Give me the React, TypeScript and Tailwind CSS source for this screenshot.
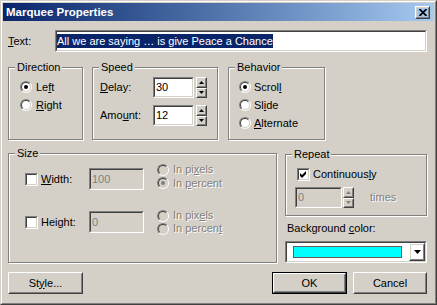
import React from "react";

const font = "font-['Liberation_Sans',Arial,sans-serif]";
const dim = "text-[#808080] [text-shadow:1px_1px_0_#fff]";

function Raised({ className = "", children }: { className?: string; children?: React.ReactNode }) {
  return (
    <div className={`border border-t-white border-l-white border-r-[#404040] border-b-[#404040] ${className}`}>
      <div className="h-full w-full border border-t-[#d4d0c8] border-l-[#d4d0c8] border-r-[#808080] border-b-[#808080] flex items-center justify-center">
        {children}
      </div>
    </div>
  );
}

function Sunken({ className = "", inner = "bg-white", children }: { className?: string; inner?: string; children?: React.ReactNode }) {
  return (
    <div className={`border border-t-[#808080] border-l-[#808080] border-r-white border-b-white ${className}`}>
      <div className={`h-full w-full border border-t-[#404040] border-l-[#404040] border-r-[#d4d0c8] border-b-[#d4d0c8] flex items-center ${inner}`}>
        {children}
      </div>
    </div>
  );
}

function Group({ label, className = "", children }: { label: string; className?: string; children?: React.ReactNode }) {
  return (
    <div className={`relative border border-[#808080] shadow-[inset_1px_1px_0_#fff,1px_1px_0_#fff] ${className}`}>
      <span className="absolute left-[6px] -top-[7px] bg-[#d4d0c8] px-[2px] leading-[13px]">{label}</span>
      {children}
    </div>
  );
}

function Radio({ checked = false, disabled = false }: { checked?: boolean; disabled?: boolean }) {
  return (
    <div className="w-[12px] h-[12px] shrink-0 rounded-full border border-t-[#808080] border-l-[#808080] border-r-white border-b-white">
      <div
        className={`w-full h-full rounded-full border border-t-[#404040] border-l-[#404040] border-r-[#d4d0c8] border-b-[#d4d0c8] flex items-center justify-center ${
          disabled ? "bg-[#d4d0c8]" : "bg-white"
        }`}
      >
        {checked && <div className={`w-[4px] h-[4px] rounded-full ${disabled ? "bg-[#808080]" : "bg-black"}`} />}
      </div>
    </div>
  );
}

function Check({ checked = false }: { checked?: boolean }) {
  return (
    <Sunken className="w-[13px] h-[13px] shrink-0" inner="bg-white justify-center">
      {checked && (
        <svg width="7" height="7" viewBox="0 0 7 7">
          <path d="M0 2 L2 4 L6 0 L6 3 L2 7 L0 5 Z" fill="#000" />
        </svg>
      )}
    </Sunken>
  );
}

function Spin({ disabled = false }: { disabled?: boolean }) {
  const c = disabled ? "#808080" : "#000";
  return (
    <div className="w-[11px] h-[21px] flex flex-col shrink-0">
      <Raised className="flex-1">
        <svg width="5" height="3" viewBox="0 0 5 3">
          <path d="M2.5 0 L5 3 L0 3 Z" fill={c} />
        </svg>
      </Raised>
      <Raised className="flex-1">
        <svg width="5" height="3" viewBox="0 0 5 3">
          <path d="M0 0 L5 0 L2.5 3 Z" fill={c} />
        </svg>
      </Raised>
    </div>
  );
}

function Btn({ className = "", children }: { className?: string; children?: React.ReactNode }) {
  return <Raised className={`h-[22px] ${className}`}>{children}</Raised>;
}

export default function App() {
  return (
    <div
      className={`w-[437px] h-[305px] border border-t-[#d4d0c8] border-l-[#d4d0c8] border-r-[#404040] border-b-[#404040] ${font} text-[11px] leading-[13px] text-black select-none`}
    >
      <div className="h-full border border-t-white border-l-white border-r-[#808080] border-b-[#808080] bg-[#d4d0c8] p-px flex flex-col">
        {/* title bar */}
        <div className="h-[18px] flex items-center bg-gradient-to-r from-[#0a246a] to-[#a6caf0] pl-[3px] pr-[4px]">
          <span className="text-white font-bold text-[11.5px]">Marquee Properties</span>
          <Raised className="ml-auto w-[15px] h-[13px]">
            <svg width="8" height="7" viewBox="0 0 8 7">
              <path d="M0.5 0 L7.5 7 M7.5 0 L0.5 7" stroke="#000" strokeWidth="1.7" />
            </svg>
          </Raised>
        </div>

        <div className="flex-1 pl-[5px] pr-[7px] flex flex-col">
          {/* text row */}
          <div className="mt-[9px] h-[22px] flex items-center">
            <span className="w-[47px]">
              <u>T</u>ext:
            </span>
            <Sunken className="flex-1 h-[22px]">
              <span className="bg-[#0a246a] text-white leading-[14px] whitespace-nowrap">
                All we are saying … is give Peace a Chance
              </span>
            </Sunken>
          </div>

          {/* direction / speed / behavior */}
          <div className="mt-[15px] flex h-[73px]">
            <Group label="Direction" className="w-[75px] h-full pt-[10px] pl-[11px]">
              <div className="h-[18px] flex items-center gap-[4px]">
                <Radio checked />
                <span>
                  Le<u>f</u>t
                </span>
              </div>
              <div className="h-[18px] flex items-center gap-[4px]">
                <Radio />
                <span>
                  <u>R</u>ight
                </span>
              </div>
            </Group>

            <Group label="Speed" className="ml-[9px] w-[126px] h-full pt-[9px] pl-[7px]">
              <div className="h-[21px] flex items-center">
                <span className="w-[53px]">
                  <u>D</u>elay:
                </span>
                <Sunken className="w-[41px] h-[21px]">
                  <span className="pl-[1px]">30</span>
                </Sunken>
                <div className="ml-[2px]">
                  <Spin />
                </div>
              </div>
              <div className="mt-[7px] h-[21px] flex items-center">
                <span className="w-[53px]">
                  Amo<u>u</u>nt:
                </span>
                <Sunken className="w-[41px] h-[21px]">
                  <span className="pl-[1px]">12</span>
                </Sunken>
                <div className="ml-[2px]">
                  <Spin />
                </div>
              </div>
            </Group>

            <Group label="Behavior" className="ml-[10px] w-[97px] h-full pt-[10px] pl-[10px]">
              <div className="h-[18px] flex items-center gap-[3px]">
                <Radio checked />
                <span>
                  Scrol<u>l</u>
                </span>
              </div>
              <div className="h-[18px] flex items-center gap-[3px]">
                <Radio />
                <span>
                  Sl<u>i</u>de
                </span>
              </div>
              <div className="h-[18px] flex items-center gap-[3px]">
                <Radio />
                <span>
                  <u>A</u>lternate
                </span>
              </div>
            </Group>
          </div>

          {/* size / repeat / color */}
          <div className="mt-[13px] flex h-[110px]">
            <Group label="Size" className="w-[269px] h-full pt-[14px] pl-[16px]">
              <div className="h-[22px] flex">
                <div className="flex items-center">
                  <Check />
                  <span className="ml-[3px] w-[48px]">
                    <u>W</u>idth:
                  </span>
                  <Sunken className="w-[55px] h-[22px]" inner="bg-[#d4d0c8]">
                    <span className="pl-[1px] text-[#808080]">100</span>
                  </Sunken>
                </div>
                <div className="ml-[13px] -mt-[5px] flex flex-col">
                  <div className="h-[18px] flex items-center gap-[4px]">
                    <Radio disabled />
                    <span className={dim}>
                      In pi<u>x</u>els
                    </span>
                  </div>
                  <div className="h-[18px] flex items-center gap-[4px]">
                    <Radio checked disabled />
                    <span className={dim}>
                      In <u>p</u>ercent
                    </span>
                  </div>
                </div>
              </div>

              <div className="mt-[21px] h-[22px] flex">
                <div className="flex items-center">
                  <Check />
                  <span className="ml-[3px] w-[48px]">Height:</span>
                  <Sunken className="w-[55px] h-[22px]" inner="bg-[#d4d0c8]">
                    <span className="pl-[1px] text-[#808080]">0</span>
                  </Sunken>
                </div>
                <div className="ml-[13px] -mt-[2px] flex flex-col">
                  <div className="h-[18px] flex items-center gap-[4px]">
                    <Radio disabled />
                    <span className={dim}>
                      In pix<u>e</u>ls
                    </span>
                  </div>
                  <div className="h-[18px] flex items-center gap-[4px]">
                    <Radio disabled />
                    <span className={dim}>
                      In percen<u>t</u>
                    </span>
                  </div>
                </div>
              </div>
            </Group>

            <div className="ml-[8px] w-[142px] mt-[1px] flex flex-col">
              <Group label="Repeat" className="h-[63px] pt-[10px]">
                <div className="pl-[11px] h-[18px] flex items-center gap-[3px]">
                  <Check checked />
                  <span>
                    Continuous<u>l</u>y
                  </span>
                </div>
                <div className="pl-[9px] mt-[4px] h-[21px] flex items-center">
                  <Sunken className="w-[47px] h-[21px]" inner="bg-[#d4d0c8]">
                    <span className="pl-[1px] text-[#808080]">0</span>
                  </Sunken>
                  <div className="ml-[1px]">
                    <Spin disabled />
                  </div>
                  <span className={`ml-[16px] ${dim}`}>times</span>
                </div>
              </Group>

              <span className="mt-[6px] pl-[2px]">
                Background <u>c</u>olor:
              </span>
              <Sunken className="mt-[6px] h-[22px]">
                <div className="ml-[6px] w-[109px] h-[12px] bg-[#00ffff] border border-[#606060]" />
                <Raised className="ml-auto w-[16px] h-[18px]">
                  <svg width="7" height="4" viewBox="0 0 7 4">
                    <path d="M0 0 L7 0 L3.5 4 Z" fill="#000" />
                  </svg>
                </Raised>
              </Sunken>
            </div>
          </div>

          {/* buttons */}
          <div className="mt-[9px] flex h-[22px]">
            <Btn className="w-[75px]">
              <span>
                St<u>y</u>le...
              </span>
            </Btn>
            <div className="ml-auto w-[75px] h-[22px] border border-black">
              <Btn className="w-full h-full">
                <span>OK</span>
              </Btn>
            </div>
            <Btn className="ml-[6px] w-[74px]">
              <span>Cancel</span>
            </Btn>
          </div>
        </div>
      </div>
    </div>
  );
}
